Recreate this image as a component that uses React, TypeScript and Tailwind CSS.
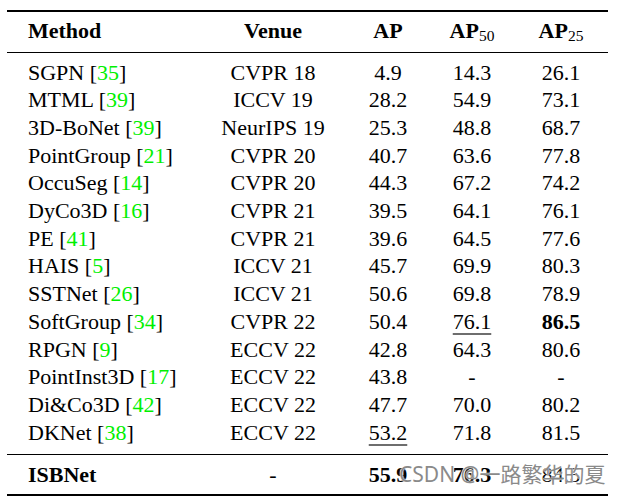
type Cell = { v: string; b?: boolean; u?: boolean };

type Row = {
  name: string;
  cite: string;
  venue: string;
  ap: Cell;
  ap50: Cell;
  ap25: Cell;
};

const rows: Row[] = [
  { name: "SGPN", cite: "35", venue: "CVPR 18", ap: { v: "4.9" }, ap50: { v: "14.3" }, ap25: { v: "26.1" } },
  { name: "MTML", cite: "39", venue: "ICCV 19", ap: { v: "28.2" }, ap50: { v: "54.9" }, ap25: { v: "73.1" } },
  { name: "3D-BoNet", cite: "39", venue: "NeurIPS 19", ap: { v: "25.3" }, ap50: { v: "48.8" }, ap25: { v: "68.7" } },
  { name: "PointGroup", cite: "21", venue: "CVPR 20", ap: { v: "40.7" }, ap50: { v: "63.6" }, ap25: { v: "77.8" } },
  { name: "OccuSeg", cite: "14", venue: "CVPR 20", ap: { v: "44.3" }, ap50: { v: "67.2" }, ap25: { v: "74.2" } },
  { name: "DyCo3D", cite: "16", venue: "CVPR 21", ap: { v: "39.5" }, ap50: { v: "64.1" }, ap25: { v: "76.1" } },
  { name: "PE", cite: "41", venue: "CVPR 21", ap: { v: "39.6" }, ap50: { v: "64.5" }, ap25: { v: "77.6" } },
  { name: "HAIS", cite: "5", venue: "ICCV 21", ap: { v: "45.7" }, ap50: { v: "69.9" }, ap25: { v: "80.3" } },
  { name: "SSTNet", cite: "26", venue: "ICCV 21", ap: { v: "50.6" }, ap50: { v: "69.8" }, ap25: { v: "78.9" } },
  { name: "SoftGroup", cite: "34", venue: "CVPR 22", ap: { v: "50.4" }, ap50: { v: "76.1", u: true }, ap25: { v: "86.5", b: true } },
  { name: "RPGN", cite: "9", venue: "ECCV 22", ap: { v: "42.8" }, ap50: { v: "64.3" }, ap25: { v: "80.6" } },
  { name: "PointInst3D", cite: "17", venue: "ECCV 22", ap: { v: "43.8" }, ap50: { v: "-" }, ap25: { v: "-" } },
  { name: "Di&Co3D", cite: "42", venue: "ECCV 22", ap: { v: "47.7" }, ap50: { v: "70.0" }, ap25: { v: "80.2" } },
  { name: "DKNet", cite: "38", venue: "ECCV 22", ap: { v: "53.2", u: true }, ap50: { v: "71.8" }, ap25: { v: "81.5" } },
];

const grid = "grid grid-cols-[193px_146px_84px_84px_94px] leading-[27.7px]";

function Num({ c }: { c: Cell }) {
  return (
    <div className="text-center">
      <span
        className={
          (c.b ? "font-bold " : "") +
          (c.u ? "underline decoration-[#6e6e6e] decoration-[1.5px] underline-offset-[4px]" : "")
        }
      >
        {c.v}
      </span>
    </div>
  );
}

function Sub({ n }: { n: string }) {
  return <span className="relative top-[3px] text-[15.5px] font-normal">{n}</span>;
}

export default function App() {
  return (
    <div className="w-[618px] h-[501px] bg-white text-black font-['Liberation_Serif',serif] text-[22px]">
      <div className="relative ml-[7px] w-[601px] pt-[10px]">
        <div className="border-t-2 border-black">
          {/* header */}
          <div className={grid + " font-bold pt-[4.5px] pb-[5.8px] border-b border-black"}>
            <div className="pl-[21px]">Method</div>
            <div className="text-center">Venue</div>
            <div className="text-center">AP</div>
            <div className="text-center">
              AP<Sub n="50" />
            </div>
            <div className="text-center">
              AP<Sub n="25" />
            </div>
          </div>

          {/* body */}
          <div className="pt-[5.5px] pb-[8px] border-b border-black">
            {rows.map((r) => (
              <div key={r.name} className={grid}>
                <div className="pl-[21px] whitespace-nowrap">
                  {r.name} [<span className="text-[#00f000]">{r.cite}</span>]
                </div>
                <div className="text-center whitespace-nowrap">{r.venue}</div>
                <Num c={r.ap} />
                <Num c={r.ap50} />
                <Num c={r.ap25} />
              </div>
            ))}
          </div>

          {/* ours */}
          <div className={grid + " pt-[5.4px] pb-[5.4px] border-b-2 border-black"}>
            <div className="pl-[21px] font-bold">ISBNet</div>
            <div className="text-center">-</div>
            <Num c={{ v: "55.9", b: true }} />
            <Num c={{ v: "76.3", b: true }} />
            <Num c={{ v: "84.5" }} />
          </div>
        </div>

        {/* watermark */}
        <div className="absolute left-[392px] top-[464px] whitespace-nowrap font-['Noto_Sans','Noto_Sans_CJK_SC',sans-serif] text-[21px] leading-[20px] text-[#8a8a8a] [text-shadow:0_0_2px_#ffffff,0_0_1px_#ffffff]">
          CSDN @一路繁华的夏
        </div>
      </div>
    </div>
  );
}
